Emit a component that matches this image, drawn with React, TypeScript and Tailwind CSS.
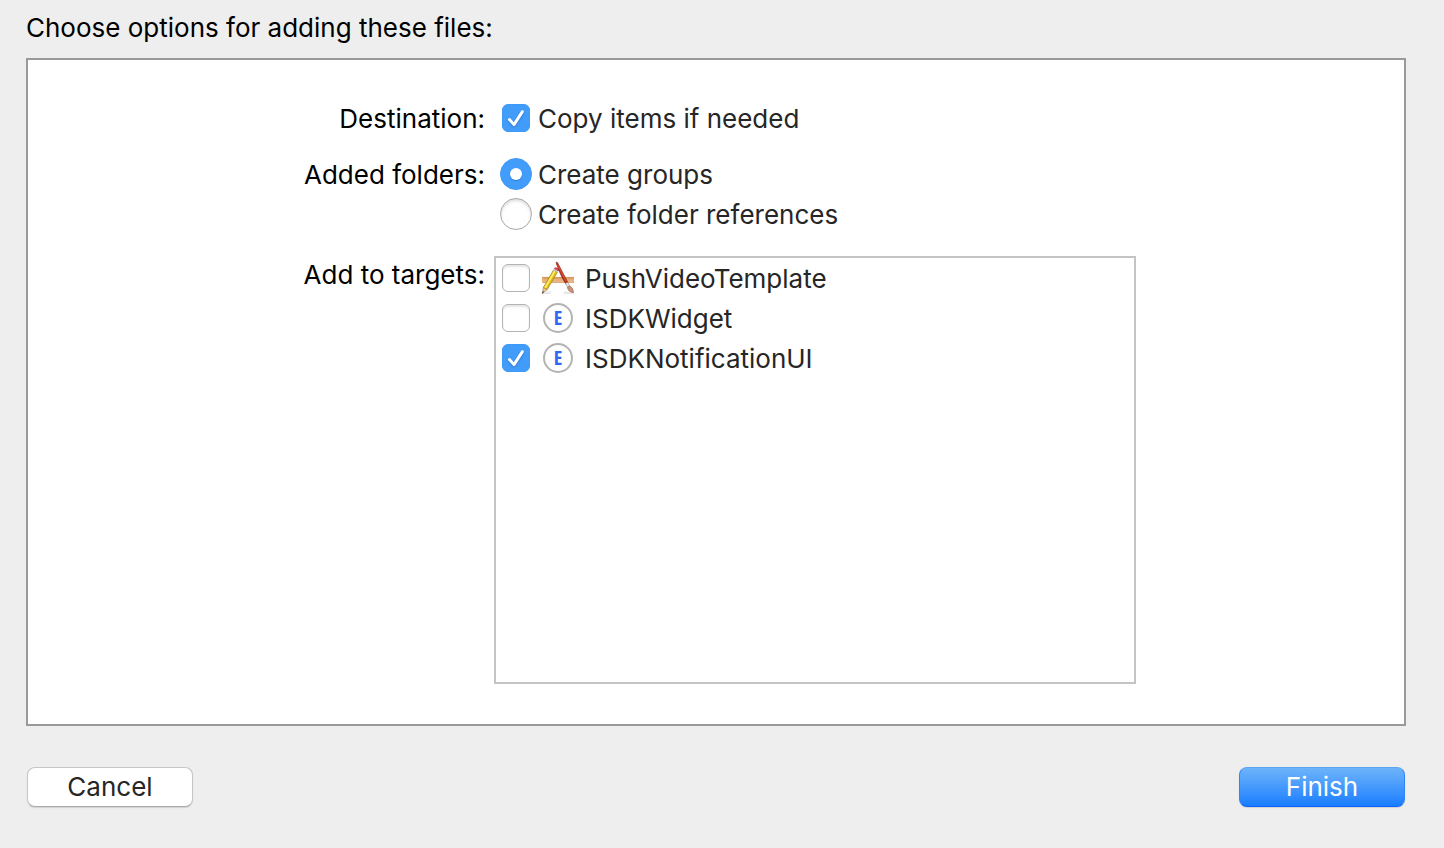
import { useState } from "react";
import type { ReactNode } from "react";

function CheckBox({
  id,
  checked,
  onChange,
}: {
  id: string;
  checked: boolean;
  onChange: (value: boolean) => void;
}) {
  return (
    <span className="grid size-8 shrink-0 place-items-center">
      <input
        id={id}
        type="checkbox"
        checked={checked}
        onChange={(e) => onChange(e.target.checked)}
        className="col-start-1 row-start-1 size-7 appearance-none rounded-md border border-[#b4b4b4] bg-white shadow-[inset_0_2px_2px_rgba(0,0,0,0.10)] checked:border-[#3f99f8] checked:bg-[#429cfa] checked:shadow-none"
      />
      {checked && (
        <svg
          viewBox="0 0 28 28"
          className="pointer-events-none col-start-1 row-start-1 size-7 drop-shadow-[0_1px_1px_rgba(0,60,140,0.4)]"
          fill="none"
          stroke="white"
          strokeWidth="2.9"
          strokeLinecap="round"
          strokeLinejoin="round"
          aria-hidden="true"
        >
          <path d="M7.4 15.6 12 20.6 20.4 7.6" />
        </svg>
      )}
    </span>
  );
}

function Radio({
  id,
  checked,
  onSelect,
}: {
  id: string;
  checked: boolean;
  onSelect: () => void;
}) {
  return (
    <span className="grid size-8 shrink-0 place-items-center">
      <input
        id={id}
        type="radio"
        name="added-folders"
        checked={checked}
        onChange={onSelect}
        className="col-start-1 row-start-1 size-8 appearance-none rounded-full border border-[#a8a8a8] bg-white shadow-[inset_0_2px_3px_rgba(0,0,0,0.14)] checked:border-[#3f99f8] checked:bg-[#429cfa] checked:shadow-none"
      />
      {checked && (
        <span className="pointer-events-none col-start-1 row-start-1 size-3 rounded-full bg-white shadow-[0_1px_1px_rgba(0,60,140,0.3)]" />
      )}
    </span>
  );
}

function AppIcon() {
  return (
    <svg viewBox="0 0 34 34" className="size-[34px]" aria-hidden="true">
      <defs>
        <linearGradient id="ruler" x1="0" y1="0" x2="0" y2="1">
          <stop offset="0" stopColor="#dfa469" />
          <stop offset="1" stopColor="#eebd8c" />
        </linearGradient>
        <linearGradient id="shade" x1="0" y1="0" x2="0" y2="1">
          <stop offset="0" stopColor="#000" stopOpacity="0" />
          <stop offset="1" stopColor="#000" stopOpacity="0.12" />
        </linearGradient>
      </defs>
      <path d="M5 30 10 29H12L9 33H2zM22 31 26 29 31 33H23z" fill="url(#shade)" />
      <rect x="1" y="16" width="32" height="5.6" fill="url(#ruler)" />
      <path d="M1 16.4H33" stroke="#cf985f" strokeWidth="0.7" />
      <path
        d="M4 16.5v1.6M7 16.5v1.6M10 16.5v1.6M13 16.5v1.6M16 16.5v1.6M19 16.5v1.6M22 16.5v1.6M25 16.5v1.6M28 16.5v1.6M31 16.5v1.6"
        stroke="#b87e49"
        strokeWidth="0.5"
      />
      <path d="M1 21.5H33" stroke="#d39a63" strokeWidth="0.7" />
      <path d="M2.4 26.4 6.3 28.4 1.3 32.6z" fill="#eac69a" stroke="#7c6541" strokeWidth="0.5" />
      <path d="M1.9 30.2 3.2 31 1.1 32.8z" fill="#333" />
      <path d="M12.4 9.2 16.3 11.4 6.3 28.4 2.4 26.4z" fill="#f7d82d" stroke="#9c7a12" strokeWidth="0.7" />
      <path d="M13.8 10.3 4.1 27" stroke="#fff17b" strokeWidth="1.1" />
      <path d="M15.1 11.2 5.5 27.9" stroke="#c59a12" strokeWidth="0.8" />
      <path d="M12.4 9.2 13.5 7.3 17.4 9.6 16.3 11.4z" fill="#bfc5cc" />
      <path d="M13.4 7.4C14 5.8 18.7 8 17.5 9.8z" fill="#f04450" stroke="#d8343e" strokeWidth="0.8" />
      <path
        d="M15.3 2.2C14.6 1.2 16.1.9 16.6 1.8L26.7 21.2 24.5 22.5C21.5 17.6 17.8 10.2 15.3 2.2z"
        fill="#bd321d"
        stroke="#892411"
        strokeWidth="0.7"
      />
      <path d="M16.8 4 25 20" stroke="#e56a4c" strokeWidth="0.7" />
      <path d="M24.5 22.5 26.7 21.2 28.8 25 26.5 26.3z" fill="#e8e2df" stroke="#867a76" strokeWidth="0.5" />
      <path d="M26.5 26.3 28.8 25C31.5 26.5 32.5 29 32.4 32 29.5 31.6 26.7 29.5 26.5 26.3z" fill="#ca9278" stroke="#8b5c49" strokeWidth="0.6" />
    </svg>
  );
}

function ExtensionIcon() {
  return (
    <span className="grid size-[30px] place-items-center rounded-full border-2 border-[#b3b3b3] bg-white font-['Liberation_Sans_Narrow','Open_Sans_Condensed','DejaVu_Sans_Condensed',sans-serif] text-xl leading-none text-[#2f68f5]">
      E
    </span>
  );
}

function RowLabel({ children }: { children: ReactNode }) {
  return <div className="h-10 pt-px text-right whitespace-nowrap text-black">{children}</div>;
}

const targets = [
  { id: "push-video", name: "PushVideoTemplate", kind: "app" },
  { id: "widget", name: "ISDKWidget", kind: "extension" },
  { id: "notification", name: "ISDKNotificationUI", kind: "extension" },
];

export default function App() {
  const [copy, setCopy] = useState(true);
  const [folders, setFolders] = useState("groups");
  const [selected, setSelected] = useState<string[]>(["notification"]);

  const toggle = (id: string, on: boolean) =>
    setSelected((list) => (on ? [...list, id] : list.filter((x) => x !== id)));

  return (
    <main className="min-h-screen bg-[#eeeeee] pt-2 pr-[38px] pb-10 pl-[26px] font-[Inter,sans-serif] text-[26px] leading-10 text-[#262626]">
      <h1 className="text-black">Choose options for adding these files:</h1>

      <section className="mt-2.5 grid grid-cols-[457fr_642fr_259fr] gap-x-[9px] border-2 border-[#999999] bg-white pt-[38px] pb-10">
        <RowLabel>Destination:</RowLabel>
        <div className="col-span-2 flex h-10 items-center gap-1.5 pl-1.5">
          <CheckBox id="copy" checked={copy} onChange={setCopy} />
          <label htmlFor="copy" className="pt-0.5">Copy items if needed</label>
        </div>

        <div className="mt-4">
          <RowLabel>Added folders:</RowLabel>
        </div>
        <div className="col-span-2 mt-4 pl-1.5" role="radiogroup" aria-label="Added folders">
          <div className="flex h-10 items-center gap-1.5">
            <Radio id="groups" checked={folders === "groups"} onSelect={() => setFolders("groups")} />
            <label htmlFor="groups" className="pt-0.5">Create groups</label>
          </div>
          <div className="flex h-10 items-center gap-1.5">
            <Radio id="refs" checked={folders === "refs"} onSelect={() => setFolders("refs")} />
            <label htmlFor="refs" className="pt-0.5">Create folder references</label>
          </div>
        </div>

        <div className="mt-5">
          <RowLabel>Add to targets:</RowLabel>
        </div>
        <ul className="mt-[22px] min-h-[428px] border-2 border-[#c4c4c4] bg-white pl-1">
          {targets.map((t) => (
            <li key={t.id} className="flex h-10 items-center">
              <CheckBox id={t.id} checked={selected.includes(t.id)} onChange={(on) => toggle(t.id, on)} />
              <label htmlFor={t.id} className="flex items-center gap-2.5 pl-[9px]">
                <span className="grid w-[34px] place-items-center">
                  {t.kind === "app" ? <AppIcon /> : <ExtensionIcon />}
                </span>
                <span className="pt-0.5">{t.name}</span>
              </label>
            </li>
          ))}
        </ul>
      </section>

      <footer className="mt-[41px] flex items-center justify-between px-px">
        <button
          type="button"
          className="h-10 w-[166px] rounded-lg border border-[#c6c6c6] border-b-[#ababab] bg-white leading-9 shadow-[0_1px_1px_rgba(0,0,0,0.12)]"
        >
          Cancel
        </button>
        <button
          type="button"
          className="h-10 w-[166px] rounded-lg border border-[#2f86f3] border-t-[#5aa6f2] border-b-[#0c63fb] bg-linear-to-b from-[#6cb3fa] to-[#147dff] leading-9 text-white shadow-[0_1px_1px_rgba(0,0,0,0.12)]"
        >
          Finish
        </button>
      </footer>
    </main>
  );
}
